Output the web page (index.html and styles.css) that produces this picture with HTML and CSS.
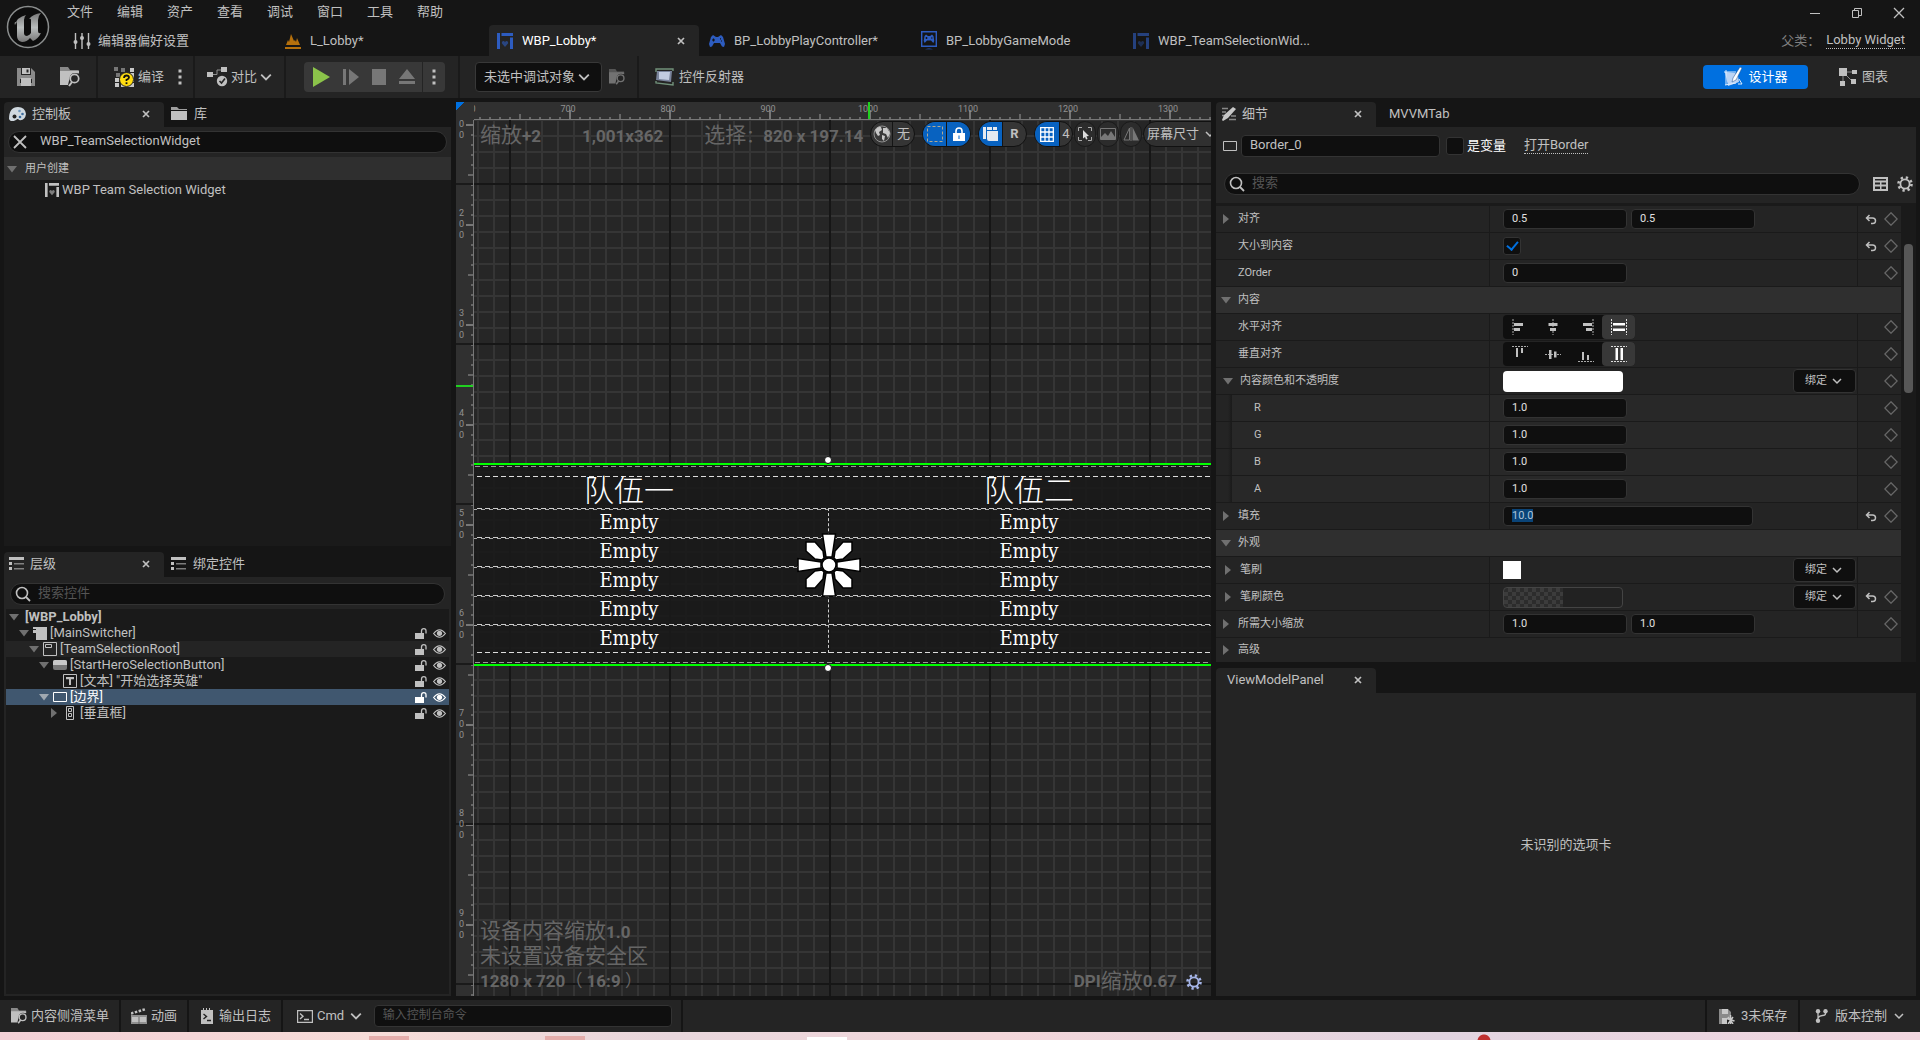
FILE: index.html
```html
<!DOCTYPE html>
<html lang="zh-CN">
<head>
	<meta charset="UTF-8">
	<meta name="viewport" content="width=device-width, initial-scale=1.0">
	<title>WBP_Lobby</title>
	<link rel="stylesheet" href="styles.css">
</head>
<body>
	<svg class="defs" aria-hidden="true">
		<symbol id="chevron" viewBox="0 0 10 10"><path d="M1 3l4 4 4-4" fill="none" stroke="currentColor" stroke-width="1.5"/></symbol>
		<symbol id="close" viewBox="0 0 10 10"><path d="M2 2l6 6M8 2L2 8" stroke="currentColor" stroke-width="1.7"/></symbol>
		<symbol id="kebab" viewBox="0 0 4 16"><path d="M.5.5h3v3h-3zM.5 6.500h3v3h-3zM.5 12.500h3v3h-3z" fill="currentColor"/></symbol>
		<symbol id="down" viewBox="0 0 10 10"><path d="M0 2h10L5 8.500z" fill="currentColor"/></symbol>
		<symbol id="right" viewBox="0 0 10 10"><path d="M2 0l6 5-6 5z" fill="currentColor"/></symbol>
		<symbol id="search" viewBox="0 0 16 16"><circle cx="7" cy="7" r="5.500" fill="none" stroke="currentColor" stroke-width="1.6"/><path d="M11 11l4 4" stroke="currentColor" stroke-width="1.8"/></symbol>
		<symbol id="sliders" viewBox="0 0 18 16"><path d="M2.500 0v16M9 0v16M15.500 0v16" stroke="currentColor" stroke-width="1.400"/><circle cx="2.500" cy="9" r="2" fill="currentColor"/><circle cx="9" cy="5" r="2" fill="currentColor"/><circle cx="15.500" cy="11" r="2" fill="currentColor"/></symbol>
		<symbol id="level" viewBox="0 0 16 16"><path d="M0 14h16v2H0zM1 12l2-5 1 2 2-8 3 7 1-1 1 2 1-4 3 7z" fill="currentColor"/></symbol>
		<symbol id="widget" viewBox="0 0 16 16"><path d="M0 0h3v16H0zM4.500 0H16v3H4.500zM13 4.500h3V16h-3z" fill="currentColor"/><path d="M8 14L4.800 10.300q-.3-2 1.500-2.300 1.200 0 1.700 1.300.5-1.300 1.700-1.300 1.800.3 1.500 2.300z" fill="currentColor" opacity=".6"/></symbol>
		<symbol id="pad" viewBox="0 0 16 14"><path d="M4 1l3 2h2l3-2 2 2 2 7-1 3-2-.5L11 9H5l-2 3.500L1 13l-1-3 2-7z" fill="currentColor"/><path d="M3 6h3M4.500 4.500v3M11 4.800h1M12 7h1" stroke="#151515" stroke-width="1.200"/></symbol>
		<symbol id="mode" viewBox="0 0 16 20"><path d="M.7.7h14.600v14.600H.7z" fill="none" stroke="currentColor" stroke-width="1.400"/><path d="M5 3.500l2 1.500h2l2-1.500 1.500 1.500.8 5-1 2L10 9.500H6L3.700 12l-1-2 .8-5z" fill="currentColor"/><path d="M4.500 7h2M5.500 6v2M10 7h1.500" stroke="#151515"/><path d="M4 18.500q4-3 8 0z" fill="currentColor" opacity=".5"/></symbol>
		<symbol id="save" viewBox="0 0 18 18"><path d="M0 0h4v7h10V0l4 4v14h-3v-7H3v7H0zM4 13h10v5H4z" fill="#8a8a8a"/><path d="M5 0h8v6H5zM4 10h10v8H4z" fill="#c0c0c0"/><path d="M9.500 1.500h2v3h-2z" fill="#242424"/><path d="M1 15h3v3H1zM14 15h3v3h-3z" fill="#8a8a8a"/></symbol>
		<symbol id="folderfind" viewBox="0 0 20 20"><path d="M0 2V0h8l2 3h9l-1 2H0z" fill="currentColor" opacity=".65"/><path d="M0 4h19v2.500q-9-2.500-9.500 5L8 18H0z" fill="currentColor"/><circle cx="14.500" cy="11.500" r="4.200" fill="none" stroke="currentColor" stroke-width="1.700"/><path d="M12 15l-3 4" stroke="currentColor" stroke-width="2"/></symbol>
		<symbol id="folder" viewBox="0 0 16 14"><path d="M0 2V0h6l2 2h8v1H0z" fill="currentColor" opacity=".8"/><path d="M0 4h16v9H0z" fill="currentColor"/></symbol>
		<symbol id="compile" viewBox="0 0 20 20"><path d="M0 0h4v4H0zM7 1h4v4H7zM2 6h4v4H2z" fill="#777"/><path d="M16 1h4v4h-4zM1 11h4v4H1zM1 16h4v4H1zM7 16h13v4H7zM16 6h4v9h-4z" fill="#c8c8c8"/><circle cx="12.500" cy="12.500" r="7" fill="#ffdc10" stroke="#242424"/><path d="M10 11q.2-2.500 2.500-2.500T15 10.500q0 1.500-2.500 2.300V14" fill="none" stroke="#111" stroke-width="1.800"/><path d="M11.600 15.300h1.800v1.800h-1.800z" fill="#111"/></symbol>
		<symbol id="diff" viewBox="0 0 21 20"><path d="M0 5h6v5H0zM14 0h6v5h-6z" fill="#c0c0c0"/><path d="M6 7.500h4V3h4" fill="none" stroke="#909090"/><circle cx="15" cy="14" r="5.200" fill="#c0c0c0"/><path d="M12.500 14l2 2 3.500-4.500" fill="none" stroke="#242424" stroke-width="1.600"/></symbol>
		<symbol id="reflector" viewBox="0 0 20 18"><path d="M2 3h15l-1 11L1 12z" fill="#7a849c"/><path d="M4 4h11l-1 8-10-1z" fill="#c2cbe0"/><path d="M1 4V1h17v2M1 13v2l17 2v-3" fill="none" stroke="#71917a" stroke-width="1.400"/></symbol>
		<symbol id="designer" viewBox="0 0 20 20"><path d="M2 5l10 1 3 3 1 6-11 4z" fill="#bcd4f4"/><path d="M17 0l2 1-6 12-4 2 1-4z" fill="#fff" stroke="#1a4c8c" stroke-width=".5"/><path d="M1 5h12M3 3v15M2 18l11-2M16 12l3 5h-4" fill="none" stroke="#dcecff"/></symbol>
		<symbol id="graph" viewBox="0 0 18 18"><path d="M4 4h10M4 4v11M4 4l10 10" stroke="#888"/><path d="M0 0h8v8H0zM13 2h5v4h-5zM1 13h5v5H1zM12 11h5v5h-5z" fill="#c0c0c0"/></symbol>
		<symbol id="palette" viewBox="0 0 17 14"><path d="M0 12Q0 0 9 0q7 0 8 7-1 7-7 6-1-2-3 0-5 3-7-1z" fill="#cfd8df"/><circle cx="5.500" cy="9.500" r="2" fill="#222"/><circle cx="10.500" cy="4" r="1.300" fill="#6f98bd"/><circle cx="13.500" cy="7" r="1.300" fill="#3d6c9d"/><circle cx="11" cy="10" r="1.300" fill="#36689c"/></symbol>
		<symbol id="tree" viewBox="0 0 15 13"><path d="M0 0h15v3H0zM0 5h3v3H0zM0 10h3v3H0z" fill="currentColor"/><path d="M5 6h10v1.500H5zM5 11h10v1.500H5z" fill="currentColor" opacity=".6"/></symbol>
		<symbol id="details" viewBox="0 0 15 14"><path d="M1 1.500h6M1 5h4M1 8.500h2M8 12.500h7M10 9h5" stroke="#888" stroke-width="1.300"/><path d="M12 0l3 2-8 9-5 3-1-1 2-5z" fill="#c8c8c8"/></symbol>
		<symbol id="unlock" viewBox="0 0 12 11"><path d="M0 5h9v6H0z" fill="currentColor"/><path d="M6.500 5V3q0-2.300 2.300-2.300T11 3v2.500" fill="none" stroke="currentColor" stroke-width="1.300"/></symbol>
		<symbol id="eye" viewBox="0 0 13 9"><path d="M.6 4.500Q6.500-3 12.400 4.500 6.500 12 .6 4.500z" fill="none" stroke="currentColor" stroke-width="1.200"/><circle cx="6.500" cy="4.300" r="2.600" fill="currentColor"/></symbol>
		<symbol id="switcher" viewBox="0 0 14 13"><path d="M0 0h3v2H0zM0 3h3v3H0zM3 0h11v13H3z" fill="currentColor"/></symbol>
		<symbol id="canvasicon" viewBox="0 0 14 14"><path d="M.5.5h13v13H.5zM2.500 2.500h6v3h-6z" fill="none" stroke="currentColor"/></symbol>
		<symbol id="buttonicon" viewBox="0 0 14 10"><rect width="14" height="10" rx="2" fill="#777"/><path d="M0 5V2q0-2 2-2h10q2 0 2 2v3z" fill="#c8c8c8"/></symbol>
		<symbol id="texticon" viewBox="0 0 14 14"><path d="M.5.5h13v13H.5z" fill="none" stroke="currentColor"/><path d="M3 3h8v2.200H8V11H6V5.200H3z" fill="currentColor"/></symbol>
		<symbol id="bordericon" viewBox="0 0 14 10"><path d="M.5.5h13v9H.5z" fill="none" stroke="currentColor"/></symbol>
		<symbol id="vbox" viewBox="0 0 8 14"><path d="M.5.5h7v13h-7zM2.500 2.500h3v3h-3zM2.500 7.500h3v3h-3z" fill="none" stroke="currentColor"/></symbol>
		<symbol id="reset" viewBox="0 0 12 11"><path d="M4.500 1L1.500 4l3 3M1.500 4h6q3 0 3 2.800T7.500 9.500H6" fill="none" stroke="currentColor" stroke-width="1.500"/></symbol>
		<symbol id="diamond" viewBox="0 0 14 14"><path d="M7 .8L13.200 7 7 13.200.8 7z" fill="none" stroke="#686868" stroke-width="1.300"/></symbol>
		<symbol id="gear" viewBox="0 0 16 16"><circle cx="8" cy="8" r="4.600" fill="none" stroke="currentColor" stroke-width="1.800"/><circle cx="8" cy="8" r="6.500" fill="none" stroke="currentColor" stroke-width="2.600" stroke-dasharray="2.300 2.805"/></symbol>
		<symbol id="table" viewBox="0 0 15 14"><path d="M0 0h15v14H0z" fill="currentColor"/><path d="M2 2h11v1.500H2zM2 5.500h5v2H2zM8.500 5.500H13v2H8.500zM2 9.500h5v2.500H2zM8.500 9.500H13v2.500H8.500z" fill="#242424"/></symbol>
		<symbol id="halign-l" viewBox="0 0 16 16"><path d="M1 0v16" stroke="#aaa" stroke-dasharray="2 1"/><path d="M2 4h9v3H2zM2 9h6v3H2z" fill="#c0c0c0"/></symbol>
		<symbol id="halign-c" viewBox="0 0 16 16"><path d="M8 0v16" stroke="#aaa" stroke-dasharray="2 1"/><path d="M3.500 4h9v3h-9zM5 9h6v3H5z" fill="#c0c0c0"/></symbol>
		<symbol id="halign-r" viewBox="0 0 16 16"><path d="M15 0v16" stroke="#aaa" stroke-dasharray="2 1"/><path d="M5 4h9v3H5zM8 9h6v3H8z" fill="#c0c0c0"/></symbol>
		<symbol id="halign-f" viewBox="0 0 16 16"><path d="M.5 0v16M15.500 0v16" stroke="#ddd" stroke-dasharray="2 1"/><path d="M2 4h12v2.500H2zM2 9.500h12V12H2z" fill="#fff"/></symbol>
		<symbol id="valign-t" viewBox="0 0 16 16"><path d="M0 .5h16" stroke="#aaa" stroke-dasharray="2 1"/><path d="M4 2h2v9H4zM9 2h2v5H9z" fill="#c0c0c0"/></symbol>
		<symbol id="valign-c" viewBox="0 0 16 16"><path d="M0 8.500h16" stroke="#aaa" stroke-dasharray="2 1"/><path d="M4 4h2.500v9H4zM9 5.500h2.500v6H9z" fill="#c0c0c0"/></symbol>
		<symbol id="valign-b" viewBox="0 0 16 16"><path d="M0 15.500h16" stroke="#aaa" stroke-dasharray="2 1"/><path d="M4 6h2v8H4zM9 9h2v5H9z" fill="#c0c0c0"/></symbol>
		<symbol id="valign-f" viewBox="0 0 16 16"><path d="M0 .5h16M0 15.500h16" stroke="#ddd" stroke-dasharray="2 1"/><path d="M4.500 2H7v12H4.500zM9.500 2H12v12H9.500z" fill="#fff"/></symbol>
		<symbol id="globe" viewBox="0 0 18 18"><circle cx="9" cy="9" r="8" fill="#3a3a3a" stroke="#909090"/><path d="M2 5q3-4 6-3l1 3-3 2 1 3-2 1-2-3zM9 10l3 1-1 5-2-2zM10 3l4 0 3 5-2 5-2-4-3-1z" fill="#c8c8c8"/></symbol>
		<symbol id="dashbox" viewBox="0 0 16 16"><path d="M.5.5h15v15H.5z" fill="none" stroke="#b0a890" stroke-dasharray="3 2"/></symbol>
		<symbol id="lock" viewBox="0 0 12 14"><path d="M0 6h12v8H0z" fill="#fff"/><path d="M3 6V4q0-3 3-3t3 3v2" fill="none" stroke="#fff" stroke-width="1.600"/><path d="M5.500 8.500h1V12h-1z" fill="#06c"/></symbol>
		<symbol id="flow" viewBox="0 0 15 14"><path d="M0 0h3v12H0zM4 0h5v3H4zM10 0h4v3h-4zM4 4h11v10H6q-2 0-2-2z" fill="#e4e9f0"/></symbol>
		<symbol id="grid" viewBox="0 0 14 15"><path d="M.7.7h12.600v13.600H.7zM5 0v15M9 0v15M0 5h14M0 10h14" fill="none" stroke="#fff" stroke-width="1.300"/></symbol>
		<symbol id="cursor" viewBox="0 0 14 14"><path d="M.5 4V.5H4M10 .5h3.500V4M13.500 10v3.500H10M4 13.500H.5V10" fill="none" stroke="#aaa"/><path d="M5 3l6 6-2.500.3L9.500 12l-1.500.5L7 10l-2 1.500z" fill="#ddd"/></symbol>
		<symbol id="image" viewBox="0 0 16 12"><path d="M.5.5h15v11H.5z" fill="none" stroke="#777"/><path d="M1 9l4-4 3 3 3-5 4 6v2H1z" fill="#777"/></symbol>
		<symbol id="flip" viewBox="0 0 16 14"><path d="M6.500 1v12H1zM8 0v14" fill="none" stroke="#777"/><path d="M9.500 0L16 13.500H9.500z" fill="#777"/></symbol>
		<symbol id="clapper" viewBox="0 0 16 16"><path d="M0 7h16v9H0z" fill="#909090"/><path d="M1 9h14v5H1z" fill="#c0c0c0"/><path d="M0 5.500L15 1" stroke="#c0c0c0" stroke-width="2.500" stroke-dasharray="2.500 1.500"/><path d="M8 9v7" stroke="#666"/></symbol>
		<symbol id="log" viewBox="0 0 12 16"><path d="M0 2h2V0h1v2h2V0h1v2h2V0h1v2h3v14H0z" fill="currentColor"/><path d="M2.500 6l3 2.500-3 2.500M6 12.500h4" fill="none" stroke="#242424" stroke-width="1.400"/></symbol>
		<symbol id="console" viewBox="0 0 16 13"><path d="M.6.6h14.800v11.800H.6z" fill="none" stroke="currentColor" stroke-width="1.200"/><path d="M3 3.500l3 2.700L3 9M7 9.500h5" fill="none" stroke="currentColor" stroke-width="1.400"/></symbol>
		<symbol id="unsaved" viewBox="0 0 16 15"><path d="M0 0h3v5h6V0l3 3v5l-3 2-6-1v6H0z" fill="#8a8a8a"/><path d="M3 0h6v5H3zM3 9h5v6H3z" fill="#c8c8c8"/><path d="M11.500 6v9M7.500 9.500l8 2.500M9 15l5-7M14 15L9 8" stroke="#c8c8c8" stroke-width="1.500"/></symbol>
		<symbol id="branch" viewBox="0 0 13 14"><path d="M3 2v10M10.500 2v2.500q0 2-3 2T3 9" fill="none" stroke="currentColor" stroke-width="1.300"/><circle cx="3" cy="2.300" r="2.200" fill="currentColor"/><circle cx="10.500" cy="2.300" r="2.200" fill="currentColor"/><circle cx="3" cy="11.700" r="2.200" fill="currentColor"/></symbol>
	</svg>

	<header class="titlebar">
		<svg class="logo" viewBox="0 0 44 44">
			<defs><linearGradient id="metal" x1="0" y1="0" x2="0" y2="1"><stop offset="0" stop-color="#777"/><stop offset=".5" stop-color="#b9bdbd"/><stop offset="1" stop-color="#777"/></linearGradient></defs>
			<circle cx="22" cy="22" r="20.500" fill="#0d0d0d" stroke="#8a8d8d" stroke-width="1.500"/>
			<path d="M9 20q2-8 11-10-2 2-2 5v13q0 3 3 3 3-1 4-3V15q0-2-2-1 4-5 12-6-3 3-3 7v11q0 3 3 2-3 6-8 8l-3-3q-3 4-8 4-5-1-5-6V20q0-3-1-3-2 0-1 3z" fill="url(#metal)"/>
		</svg>
		<div class="titlerows">
			<div class="menurow">
				<nav class="menu">
					<button>文件</button><button>编辑</button><button>资产</button><button>查看</button><button>调试</button><button>窗口</button><button>工具</button><button>帮助</button>
				</nav>
				<div class="winbtns">
					<button aria-label="最小化"><svg width="12" height="12" viewBox="0 0 12 12"><path d="M1 6.500h10" stroke="currentColor"/></svg></button>
					<button aria-label="还原"><svg width="12" height="12" viewBox="0 0 12 12"><path d="M1.500 3.500h6v7h-6zM3.500 3V1.500h7v7H8" fill="none" stroke="currentColor"/></svg></button>
					<button aria-label="关闭"><svg width="12" height="12" viewBox="0 0 12 12"><path d="M1 1l10 10M11 1L1 11" stroke="currentColor" stroke-width="1.300"/></svg></button>
				</div>
			</div>
			<div class="tabrow">
				<nav class="filetabs">
					<button class="filetab"><svg width="18" height="16"><use href="#sliders"/></svg>编辑器偏好设置</button>
					<button class="filetab level"><svg width="16" height="16"><use href="#level"/></svg><span>L_Lobby*</span></button>
					<button class="filetab blue current"><svg width="16" height="16"><use href="#widget"/></svg><span>WBP_Lobby*</span><svg class="x" width="10" height="10"><use href="#close"/></svg></button>
					<button class="filetab blue"><svg width="16" height="14"><use href="#pad"/></svg><span>BP_LobbyPlayController*</span></button>
					<button class="filetab blue"><svg width="16" height="20"><use href="#mode"/></svg><span>BP_LobbyGameMode</span></button>
					<button class="filetab blue dim"><svg width="16" height="16"><use href="#widget"/></svg><span>WBP_TeamSelectionWid...</span></button>
				</nav>
				<div class="parent">父类：<a href="#">Lobby Widget</a></div>
			</div>
		</div>
	</header>

	<div class="toolbar">
		<div class="tools filetools">
			<button aria-label="保存"><svg width="18" height="18"><use href="#save"/></svg></button>
			<button aria-label="浏览"><svg width="20" height="20"><use href="#folderfind"/></svg></button>
		</div>
		<div class="tools compile">
			<button><svg width="20" height="20"><use href="#compile"/></svg>编译</button>
			<button aria-label="编译选项"><svg width="4" height="16"><use href="#kebab"/></svg></button>
		</div>
		<div class="tools diff">
			<button><svg width="21" height="20"><use href="#diff"/></svg>对比<svg width="12" height="12"><use href="#chevron"/></svg></button>
		</div>
		<div class="tools playbox">
			<div class="play">
				<button aria-label="运行"><svg width="17" height="20" viewBox="0 0 17 20"><path d="M0 0l17 10L0 20z" fill="#8bc34a"/></svg></button>
				<button aria-label="跳帧"><svg width="16" height="18" viewBox="0 0 16 18"><path d="M0 1h3v16H0zM6 1l10 8-10 8z" fill="#777"/></svg></button>
				<button aria-label="停止"><svg width="14" height="16" viewBox="0 0 14 16"><path d="M0 0h14v16H0z" fill="#777"/></svg></button>
				<button aria-label="弹出"><svg width="16" height="16" viewBox="0 0 16 16"><path d="M8 0l8 10H0zM0 12h16v3H0z" fill="#777"/></svg></button>
				<button class="more" aria-label="运行选项"><svg width="4" height="16"><use href="#kebab"/></svg></button>
			</div>
		</div>
		<div class="tools debug">
			<label class="picker"><select aria-label="调试对象"><option>未选中调试对象</option></select><svg width="12" height="12"><use href="#chevron"/></svg></label>
			<button class="faded" aria-label="浏览调试对象"><svg width="16" height="18"><use href="#folderfind"/></svg></button>
		</div>
		<div class="tools reflect">
			<button><svg width="20" height="18"><use href="#reflector"/></svg>控件反射器</button>
		</div>
		<div class="modes">
			<button class="mode on"><svg width="20" height="20"><use href="#designer"/></svg>设计器</button>
			<button class="mode"><svg width="18" height="18"><use href="#graph"/></svg>图表</button>
		</div>
	</div>

	<main class="workspace">
		<div class="side">
			<section class="panel">
				<div class="tabs">
					<button class="tab on"><svg width="17" height="14"><use href="#palette"/></svg>控制板<svg class="x" width="10" height="10"><use href="#close"/></svg></button>
					<button class="tab"><svg width="16" height="14"><use href="#folder"/></svg>库</button>
				</div>
				<div class="panelbody">
					<label class="searchbox palettesearch"><svg width="16" height="16" viewBox="0 0 16 16"><path d="M2 2l12 12M14 2L2 14" stroke="currentColor" stroke-width="1.800"/></svg><input type="text" aria-label="搜索控制板" value="WBP_TeamSelectionWidget"></label>
					<div class="group"><svg width="10" height="10"><use href="#down"/></svg>用户创建</div>
					<div class="list"><div class="listitem"><svg width="16" height="14"><use href="#widget"/></svg>WBP Team Selection Widget</div></div>
				</div>
			</section>
			<section class="panel">
				<div class="tabs">
					<button class="tab on"><svg width="15" height="13"><use href="#tree"/></svg>层级<svg class="x" width="10" height="10"><use href="#close"/></svg></button>
					<button class="tab"><svg width="15" height="13"><use href="#tree"/></svg>绑定控件</button>
				</div>
				<div class="panelbody hierarchy">
					<label class="searchbox"><svg width="16" height="16"><use href="#search"/></svg><input type="text" aria-label="搜索控件" placeholder="搜索控件"></label>
					<ul class="tree">
						<li><svg class="arrow" width="10" height="10"><use href="#down"/></svg><b>[WBP_Lobby]</b></li>
						<li class="d1"><svg class="arrow" width="10" height="10"><use href="#down"/></svg><svg class="kind" width="14" height="13"><use href="#switcher"/></svg>[MainSwitcher]<span class="flags"><svg width="12" height="11"><use href="#unlock"/></svg><svg width="13" height="9"><use href="#eye"/></svg></span></li>
						<li class="d2 alt"><svg class="arrow" width="10" height="10"><use href="#down"/></svg><svg class="kind" width="14" height="14"><use href="#canvasicon"/></svg>[TeamSelectionRoot]<span class="flags"><svg width="12" height="11"><use href="#unlock"/></svg><svg width="13" height="9"><use href="#eye"/></svg></span></li>
						<li class="d3"><svg class="arrow" width="10" height="10"><use href="#down"/></svg><svg class="kind" width="14" height="10"><use href="#buttonicon"/></svg>[StartHeroSelectionButton]<span class="flags"><svg width="12" height="11"><use href="#unlock"/></svg><svg width="13" height="9"><use href="#eye"/></svg></span></li>
						<li class="d4"><span class="arrow"></span><svg class="kind" width="14" height="14"><use href="#texticon"/></svg>[文本] "开始选择英雄"<span class="flags"><svg width="12" height="11"><use href="#unlock"/></svg><svg width="13" height="9"><use href="#eye"/></svg></span></li>
						<li class="d3 selected"><svg class="arrow" width="10" height="10"><use href="#down"/></svg><svg class="kind" width="14" height="10"><use href="#bordericon"/></svg>[边界]<span class="flags"><svg width="12" height="11"><use href="#unlock"/></svg><svg width="13" height="9"><use href="#eye"/></svg></span></li>
						<li class="d4"><svg class="arrow" width="10" height="10"><use href="#right"/></svg><svg class="kind" width="14" height="14"><use href="#vbox"/></svg>[垂直框]<span class="flags"><svg width="12" height="11"><use href="#unlock"/></svg><svg width="13" height="9"><use href="#eye"/></svg></span></li>
					</ul>
				</div>
			</section>
		</div>

		<section class="stage">
			<div class="corner"></div>
			<div class="ruler-x"><span>600</span><span>700</span><span>800</span><span>900</span><span>1000</span><span>1100</span><span>1200</span><span>1300</span><i></i></div>
			<div class="ruler-y"><span>100</span><span>200</span><span>300</span><span>400</span><span>500</span><span>600</span><span>700</span><span>800</span><span>900</span><i></i></div>
			<div class="canvas">
				<div class="border-widget">
					<div class="vertical-box">
						<div class="heads"><span>队伍一</span><span>队伍二</span></div>
						<div class="teams">
							<div class="team"><span>Empty</span><span>Empty</span><span>Empty</span><span>Empty</span><span>Empty</span></div>
							<div class="team"><span>Empty</span><span>Empty</span><span>Empty</span><span>Empty</span><span>Empty</span></div>
						</div>
					</div>
					<b class="handle top"></b>
					<b class="handle bottom"></b>
					<svg class="anchor" viewBox="-32 -32 64 64">
						<g fill="#fff" stroke="#000" stroke-width="1.500">
							<path d="M-6.500-31h13L3-8h-6z"/>
							<path d="M-31-6.500v13L-8 3v-6zM31-6.500v13L8 3v-6zM-6.500 31h13L3 8h-6z"/>
							<path d="M-23-23h9l8 9 1 7-2 2-7-1-9-8zM23-23h-9l-8 9-1 7 2 2 7-1 9-8zM-23 23h9l8-9 1-7-2-2-7 1-9 8zM23 23h-9l-8-9-1-7 2-2 7 1 9 8z"/>
							<circle r="7"/>
						</g>
					</svg>
				</div>
				<div class="hud">
					<div class="hudtext"><span><big>缩放</big>+2</span><span>1,001x362</span><span><big>选择</big><em>：</em>820 x 197.14</span></div>
					<div class="hudtools">
						<div class="pill"><button aria-label="本地化"><svg width="18" height="18"><use href="#globe"/></svg></button><button>无</button></div>
						<div class="pill"><button class="on" aria-label="轮廓"><svg width="16" height="16"><use href="#dashbox"/></svg></button><button class="on" aria-label="锁定"><svg width="12" height="14"><use href="#lock"/></svg></button></div>
						<div class="pill"><button class="on" aria-label="布局"><svg width="15" height="14"><use href="#flow"/></svg></button><button><b>R</b></button></div>
						<div class="pill snap"><button class="on" aria-label="网格"><svg width="14" height="15"><use href="#grid"/></svg></button><button>4</button></div>
						<button class="round" aria-label="缩放至适合"><svg width="14" height="14"><use href="#cursor"/></svg></button>
						<button class="round" aria-label="预览背景"><svg width="16" height="12"><use href="#image"/></svg></button>
						<button class="round" aria-label="翻转"><svg width="16" height="14"><use href="#flip"/></svg></button>
						<label class="screensize"><select aria-label="屏幕尺寸"><option>屏幕尺寸</option></select><svg width="10" height="10"><use href="#chevron"/></svg></label>
					</div>
				</div>
				<div class="hud foot">
					<div class="notes"><p><big>设备内容缩放</big>1.0</p><p><big>未设置设备安全区</big></p><p>1280 x 720<em>（</em> 16:9 <em>）</em></p></div>
					<div class="dpi">DPI<big>缩放</big>0.67<svg width="16" height="16"><use href="#gear"/></svg></div>
				</div>
			</div>
		</section>

		<div class="inspector">
			<section class="panel detailspanel">
				<div class="tabs">
					<button class="tab on"><svg width="15" height="14"><use href="#details"/></svg>细节<svg class="x" width="10" height="10"><use href="#close"/></svg></button>
					<button class="tab">MVVMTab</button>
				</div>
				<div class="panelbody">
					<div class="namerow">
						<svg width="14" height="10"><use href="#bordericon"/></svg>
						<input class="name" type="text" aria-label="名称" value="Border_0">
						<label class="isvar"><input type="checkbox">是变量</label>
						<a href="#">打开Border</a>
					</div>
					<div class="findrow">
						<label class="searchbox"><svg width="16" height="16"><use href="#search"/></svg><input type="text" aria-label="搜索" placeholder="搜索"></label>
						<button aria-label="属性矩阵"><svg width="15" height="14"><use href="#table"/></svg></button>
						<button aria-label="设置"><svg width="16" height="16"><use href="#gear"/></svg></button>
					</div>
					<div class="scroller">
						<div class="props">
							<div class="prop"><div class="name"><svg width="10" height="10"><use href="#right"/></svg>对齐</div><div class="value"><input type="text" aria-label="对齐 X" value="0.5"><input type="text" aria-label="对齐 Y" value="0.5"></div><div class="keys"><svg width="12" height="11"><use href="#reset"/></svg><svg width="14" height="14"><use href="#diamond"/></svg></div></div>
							<div class="prop"><label class="name" for="autosize">大小到内容</label><div class="value"><input id="autosize" type="checkbox" checked></div><div class="keys"><svg width="12" height="11"><use href="#reset"/></svg><svg width="14" height="14"><use href="#diamond"/></svg></div></div>
							<div class="prop"><label class="name" for="zorder">ZOrder</label><div class="value"><input id="zorder" type="text" value="0"></div><div class="keys"><svg width="14" height="14"><use href="#diamond"/></svg></div></div>
							<div class="category"><svg width="10" height="10"><use href="#down"/></svg>内容</div>
							<div class="prop"><div class="name">水平对齐</div><div class="value"><div class="align"><button aria-label="左"><svg width="16" height="16"><use href="#halign-l"/></svg></button><button aria-label="中"><svg width="16" height="16"><use href="#halign-c"/></svg></button><button aria-label="右"><svg width="16" height="16"><use href="#halign-r"/></svg></button><button class="on" aria-label="填充"><svg width="16" height="16"><use href="#halign-f"/></svg></button></div></div><div class="keys"><svg width="14" height="14"><use href="#diamond"/></svg></div></div>
							<div class="prop"><div class="name">垂直对齐</div><div class="value"><div class="align"><button aria-label="上"><svg width="16" height="16"><use href="#valign-t"/></svg></button><button aria-label="中"><svg width="16" height="16"><use href="#valign-c"/></svg></button><button aria-label="下"><svg width="16" height="16"><use href="#valign-b"/></svg></button><button class="on" aria-label="填充"><svg width="16" height="16"><use href="#valign-f"/></svg></button></div></div><div class="keys"><svg width="14" height="14"><use href="#diamond"/></svg></div></div>
							<div class="prop bindable"><div class="name"><svg width="10" height="10"><use href="#down"/></svg>内容颜色和不透明度</div><div class="value"><button class="swatch" aria-label="内容颜色"></button><button class="bind">绑定<svg width="10" height="10"><use href="#chevron"/></svg></button></div><div class="keys"><svg width="14" height="14"><use href="#diamond"/></svg></div></div>
							<div class="prop child"><label class="name" for="cr">R</label><div class="value"><input id="cr" type="text" value="1.0"></div><div class="keys"><svg width="14" height="14"><use href="#diamond"/></svg></div></div>
							<div class="prop child"><label class="name" for="cg">G</label><div class="value"><input id="cg" type="text" value="1.0"></div><div class="keys"><svg width="14" height="14"><use href="#diamond"/></svg></div></div>
							<div class="prop child"><label class="name" for="cb">B</label><div class="value"><input id="cb" type="text" value="1.0"></div><div class="keys"><svg width="14" height="14"><use href="#diamond"/></svg></div></div>
							<div class="prop child"><label class="name" for="ca">A</label><div class="value"><input id="ca" type="text" value="1.0"></div><div class="keys"><svg width="14" height="14"><use href="#diamond"/></svg></div></div>
							<div class="prop"><label class="name" for="padding"><svg width="10" height="10"><use href="#right"/></svg>填充</label><div class="value"><input id="padding" class="wide" type="text" value="10.0"></div><div class="keys"><svg width="12" height="11"><use href="#reset"/></svg><svg width="14" height="14"><use href="#diamond"/></svg></div></div>
							<div class="category"><svg width="10" height="10"><use href="#down"/></svg>外观</div>
							<div class="prop bindable"><div class="name"><svg width="10" height="10"><use href="#right"/></svg>笔刷</div><div class="value"><span class="brush"></span><button class="bind">绑定<svg width="10" height="10"><use href="#chevron"/></svg></button></div><div class="keys"></div></div>
							<div class="prop bindable"><div class="name"><svg width="10" height="10"><use href="#right"/></svg>笔刷颜色</div><div class="value"><button class="swatch clear" aria-label="笔刷颜色"></button><button class="bind">绑定<svg width="10" height="10"><use href="#chevron"/></svg></button></div><div class="keys"><svg width="12" height="11"><use href="#reset"/></svg><svg width="14" height="14"><use href="#diamond"/></svg></div></div>
							<div class="prop"><div class="name"><svg width="10" height="10"><use href="#right"/></svg>所需大小缩放</div><div class="value"><input type="text" aria-label="缩放 X" value="1.0"><input type="text" aria-label="缩放 Y" value="1.0"></div><div class="keys"><svg width="14" height="14"><use href="#diamond"/></svg></div></div>
							<div class="category advanced"><svg width="10" height="10"><use href="#right"/></svg>高级</div>
						</div>
						<div class="scrollbar"><div class="thumb"></div></div>
					</div>
				</div>
			</section>
			<section class="panel viewmodel">
				<div class="tabs"><button class="tab on">ViewModelPanel<svg class="x" width="10" height="10"><use href="#close"/></svg></button></div>
				<div class="panelbody unknown">未识别的选项卡</div>
			</section>
		</div>
	</main>

	<footer class="statusbar">
		<button class="drawer"><svg width="16" height="16"><use href="#folderfind"/></svg>内容侧滑菜单</button>
		<button class="anim"><svg width="16" height="16"><use href="#clapper"/></svg>动画</button>
		<button class="output"><svg width="12" height="16"><use href="#log"/></svg>输出日志</button>
		<div class="cmd">
			<svg width="16" height="13"><use href="#console"/></svg>
			<label><select aria-label="命令类型"><option>Cmd</option></select><svg width="12" height="12"><use href="#chevron"/></svg></label>
			<input type="text" aria-label="控制台命令" placeholder="输入控制台命令">
		</div>
		<div class="fill"></div>
		<button class="unsaved"><svg width="16" height="15"><use href="#unsaved"/></svg>3未保存</button>
		<button class="source"><svg width="13" height="14"><use href="#branch"/></svg>版本控制<svg width="10" height="10"><use href="#chevron"/></svg></button>
	</footer>
	<div class="desktop"></div>
	<script>
		// padding field is being edited, its value stays selected
		const padding = document.getElementById("padding");
		padding.focus({ preventScroll: true });
		padding.select();
	</script>
</body>
</html>
```
FILE: styles.css
```css
* {
	box-sizing: border-box;
}

body {
	margin: 0;
	min-height: 100vh;
	display: flex;
	flex-direction: column;
	background-color: #151515;
	color: #c0c0c0;
	font-family: Roboto, "Noto Sans CJK SC", sans-serif;
	font-size: 13px;
	line-height: 16px;
	overflow-x: hidden;
}

button, input, select {
	font: inherit;
	color: inherit;
	margin: 0;
	padding: 0;
	border: none;
	background: none;
	outline: none;
}

button {
	display: flex;
	align-items: center;
	white-space: nowrap;
}

select {
	appearance: none;
}

svg {
	flex: none;
	display: block;
}

.defs {
	position: absolute;
	width: 0;
	height: 0;
}

a {
	color: #c0c0c0;
	text-decoration: none;
	border-bottom: 1px dotted #c0c0c0;
}

input::placeholder {
	color: #555;
	opacity: 1;
}

/* title bar */
.titlebar {
	display: flex;
	height: 56px;
}

.logo {
	width: 44px;
	height: 44px;
	margin: 5px 11px 0 6px;
}

.titlerows {
	flex: 1;
}

.menurow, .tabrow {
	display: flex;
	justify-content: space-between;
}

.menurow {
	height: 25px;
}

.menu, .winbtns, .filetabs {
	display: flex;
}

.menu button {
	width: 50px;
	padding: 0 6px 2px;
}

.winbtns button {
	width: 42px;
	justify-content: center;
}

.tabrow {
	height: 31px;
}

.filetabs {
	margin-left: 4px;
}

.filetab {
	width: 212px;
	padding: 0 8px;
	gap: 9px;
	border-radius: 4px 4px 0 0;
}

.filetab:first-child {
	gap: 7px;
}

.filetab.current {
	width: 210px;
	margin-right: 2px;
	background-color: #242424;
	color: #fff;
}

.level svg {
	color: #b5700c;
}

.blue svg {
	color: #2d5cc0;
}

.dim svg {
	color: #25417e;
}

.filetab .x {
	margin-left: auto;
	margin-right: 5px;
	color: #c0c0c0;
}

.parent {
	display: flex;
	gap: 6px;
	align-items: center;
	margin-right: 15px;
	color: #808080;
}

/* toolbar */
.toolbar {
	display: flex;
	height: 42px;
	margin-bottom: 4px;
	background-color: #242424;
}

.tools {
	display: flex;
	align-items: center;
	border-right: 2px solid #1a1a1a;
}

.tools button {
	gap: 4px;
}

.filetools {
	width: 98px;
	padding-left: 17px;
	gap: 25px;
}

.compile {
	width: 97px;
	padding-left: 16px;
	gap: 14px;
}

.diff {
	width: 91px;
	padding-left: 12px;
}

.diff button {
	gap: 3px;
}

.playbox {
	width: 174px;
	padding-left: 18px;
}

.play {
	display: flex;
	width: 141px;
	height: 30px;
	padding-left: 9px;
	gap: 13px;
	border-radius: 4px;
	background-color: #383838;
}

.play .more {
	width: 24px;
	margin-left: -6px;
	justify-content: center;
	border-left: 1px solid #242424;
}

.debug {
	width: 179px;
	padding-left: 15px;
	gap: 7px;
}

.picker {
	display: flex;
	align-items: center;
	width: 127px;
	height: 30px;
	padding: 0 8px;
	background-color: #0f0f0f;
	border: 1px solid #383838;
	border-radius: 4px;
}

.picker select {
	width: 94px;
}

.faded {
	opacity: 0.5;
}

.reflect {
	border: none;
	padding-left: 16px;
}

.modes {
	display: flex;
	align-items: center;
	gap: 16px;
	margin-left: auto;
	margin-right: 17px;
}

.mode {
	height: 24px;
	padding: 0 15px;
	gap: 5px;
}

.mode.on {
	width: 105px;
	justify-content: center;
	background-color: #0070e0;
	color: #fff;
	border-radius: 4px;
}

/* docked panels */
.workspace {
	flex: 1;
	display: grid;
	grid-template-columns: 447fr 755fr 700fr;
	gap: 5px;
	padding: 0 4px;
}

.side, .inspector {
	display: flex;
	flex-direction: column;
	gap: 6px;
	min-width: 0;
}

.panel {
	flex: 1;
	display: flex;
	flex-direction: column;
}

.tabs {
	display: flex;
	height: 25px;
}

.tab {
	gap: 7px;
	padding: 0 12px 2px 7px;
	border-radius: 4px 4px 0 0;
}

.tab.on {
	width: 160px;
	padding: 0 13px 2px 5px;
	gap: 6px;
	background-color: #242424;
}

.tab .x {
	margin-left: auto;
}

.viewmodel .tab.on {
	padding-left: 11px;
}

.detailspanel .tab:last-child {
	padding-left: 13px;
}

.panelbody {
	flex: 1;
	display: flex;
	flex-direction: column;
	background-color: #242424;
}

.searchbox {
	display: flex;
	align-items: center;
	gap: 7px;
	height: 22px;
	margin: 6px;
	padding: 0 4px;
	background-color: #0f0f0f;
	border: 1px solid #333;
	border-radius: 11px;
}

.searchbox input {
	flex: 1;
	padding-bottom: 2px;
}

.palettesearch {
	margin: 4px;
	padding: 0 3px;
	gap: 12px;
}

.group {
	display: flex;
	align-items: center;
	gap: 8px;
	height: 23px;
	padding-left: 3px;
	background-color: #2f2f2f;
	font-size: 11px;
}

.group svg, .tree .arrow, .prop .name svg, .category svg {
	color: #707070;
}

.list {
	flex: 1;
	background-color: #1a1a1a;
}

.listitem {
	display: flex;
	align-items: center;
	height: 20px;
	padding-left: 40px;
	gap: 2px;
}

.hierarchy {
	padding: 0 2px 2px;
}

.hierarchy .searchbox {
	margin: 6px 4px 4px;
}

.tree {
	flex: 1;
	margin: 0;
	padding: 0;
	list-style: none;
	background-color: #1a1a1a;
}

.tree li {
	display: flex;
	align-items: center;
	gap: 3px;
	height: 16px;
	padding: 0 3px;
}

.tree b {
	margin-left: 2px;
}

.tree .arrow {
	width: 10px;
	margin-right: 1px;
}

.tree .d1 {
	padding-left: 13px;
}

.tree .d2 {
	padding-left: 23px;
}

.tree .d3 {
	padding-left: 33px;
}

.tree .d4 {
	padding-left: 43px;
}

.tree .alt {
	background-color: #242424;
}

.tree .selected {
	background-color: #40576f;
	color: #fff;
}

.tree .selected .arrow {
	color: #a0a8b0;
}

.flags {
	display: flex;
	align-items: center;
	gap: 6px;
	margin-left: auto;
}

/* designer stage */
.stage {
	display: grid;
	grid-template: 18px 1fr / 18px 1fr;
	min-width: 0;
	background-color: #303030;
}

.corner {
	background: linear-gradient(135deg, #0070e0 6px, #303030 6px);
}

.ruler-x, .ruler-y {
	position: relative;
	display: flex;
	overflow: hidden;
	color: #909090;
	font-size: 9px;
	line-height: 11px;
}

.ruler-x {
	border-bottom: 1px solid #777;
	background:
		repeating-linear-gradient(90deg, #777 0 2px, transparent 2px 100px) -5px 100% / 2000px 9px no-repeat,
		repeating-linear-gradient(90deg, #666 0 2px, transparent 2px 50px) -5px 100% / 2000px 5px no-repeat,
		repeating-linear-gradient(90deg, #666 0 2px, transparent 2px 10px) -5px 100% / 2000px 2px no-repeat;
}

.ruler-x span {
	flex: none;
	width: 100px;
	margin-top: 2px;
	text-align: center;
}

.ruler-x span:first-child {
	margin-left: -56px;
}

.ruler-x i {
	position: absolute;
	left: 394px;
	top: 0;
	width: 2px;
	height: 18px;
	background-color: #20d020;
}

.ruler-y {
	flex-direction: column;
	border-right: 1px solid #777;
	background:
		linear-gradient(#1a1a1a 0 2px, transparent 2px) 0 63px / 100% 160px,
		repeating-linear-gradient(#777 0 2px, transparent 2px 100px) 100% 4px / 7px 2000px no-repeat,
		repeating-linear-gradient(#666 0 2px, transparent 2px 50px) 100% 4px / 5px 2000px no-repeat,
		repeating-linear-gradient(#666 0 2px, transparent 2px 10px) 100% 4px / 2px 2000px no-repeat;
}

.ruler-y span {
	flex: none;
	display: flex;
	align-items: center;
	justify-content: center;
	width: 11px;
	height: 100px;
	line-height: 11px;
	word-break: break-all;
	padding: 0 3px;
	text-align: center;
}

.ruler-y span:first-child {
	margin-top: -46px;
}

.ruler-y i {
	position: absolute;
	left: 0;
	top: 265px;
	width: 18px;
	height: 2px;
	background-color: #20d020;
}

.canvas {
	position: relative;
	display: flex;
	flex-direction: column;
	justify-content: space-between;
	overflow: hidden;
	background:
		linear-gradient(90deg, #161616 2px, transparent 2px) 35px 0 / 160px 100%,
		linear-gradient(#161616 2px, transparent 2px) 0 63px / 100% 160px,
		linear-gradient(90deg, #353535 2px, transparent 2px) 3px 0 / 16px 100%,
		linear-gradient(#353535 2px, transparent 2px) 0 15px / 100% 16px,
		#262626;
}

/* selected border widget, at its own place on the canvas */
.border-widget {
	position: absolute;
	left: -55px;
	top: 343px;
	width: 820px;
	padding: 11px 10px;
	border: solid #00ff00;
	border-width: 2px 0;
	background:
		repeating-linear-gradient(90deg, #999 0 5px, transparent 5px 8px) 0 1px / 100% 1px no-repeat,
		repeating-linear-gradient(90deg, #999 0 5px, transparent 5px 8px) 0 197px / 100% 1px no-repeat,
		rgba(26, 26, 26, 0.9);
}

.vertical-box {
	background:
		repeating-linear-gradient(90deg, #ddd 0 5px, transparent 5px 8px) 0 0 / 100% 1px no-repeat,
		repeating-linear-gradient(90deg, #ddd 0 5px, transparent 5px 8px) 0 100% / 100% 1px no-repeat;
}

.heads {
	display: grid;
	grid-template-columns: 1fr 1fr;
	height: 32px;
	color: #fff;
	font-size: 30px;
	font-weight: 300;
	line-height: 30px;
	text-align: center;
}

.teams {
	display: grid;
	grid-template-columns: 1fr 1fr;
}

.team span {
	display: block;
	height: 29px;
	color: #fff;
	font-family: "DejaVu Serif Condensed", "DejaVu Serif", serif;
	font-size: 20px;
	line-height: 29px;
	text-align: center;
	background:
		repeating-linear-gradient(90deg, #ccc 0 5px, transparent 5px 8px) 0 0 / 100% 1px no-repeat,
		repeating-linear-gradient(90deg, transparent 0 4px, #aaa 4px 8px) 0 1px / 100% 1px no-repeat;
}

.team + .team {
	margin-left: -1px;
	border-left: 1px dashed #ccc;
}

.handle {
	position: absolute;
	left: 50%;
	width: 8px;
	height: 8px;
	margin-left: -5px;
	border: 1px solid #111;
	border-radius: 50%;
	background-color: #fff;
}

.handle.top {
	top: -9px;
}

.handle.bottom {
	bottom: -8px;
}

.anchor {
	position: absolute;
	left: 50%;
	top: 50%;
	width: 64px;
	height: 64px;
	margin: -32px;
}

.hud {
	position: relative;
	display: flex;
	justify-content: space-between;
	align-items: flex-start;
	color: #666;
	font-size: 17px;
	font-weight: 700;
	line-height: 25px;
}

.hud big {
	font-size: 21px;
	font-weight: 400;
}

.hud em {
	font-style: normal;
	font-weight: 400;
}

.hudtext {
	display: flex;
	align-items: center;
	gap: 41px;
	height: 32px;
	padding-left: 6px;
	white-space: nowrap;
}

.hudtools {
	display: flex;
	align-items: center;
	width: 341px;
	height: 28px;
	flex: none;
	overflow: hidden;
	color: #c0c0c0;
	font-size: 13px;
	font-weight: 400;
	line-height: 16px;
}

.pill {
	display: flex;
	flex: none;
	width: 49px;
	height: 26px;
	margin-right: 7px;
	overflow: hidden;
	border: 1px solid #111;
	border-radius: 13px;
	background-color: #353535;
}

.pill:first-child {
	width: 45px;
}

.pill.snap {
	width: 39px;
	margin-right: 1px;
}

.pill button {
	flex: 1;
	justify-content: center;
}

.pill.snap .on {
	flex: none;
	width: 24px;
}

.pill button + button {
	border-left: 1px solid #151515;
}

.pill .on {
	background-color: #0862c0;
}

.round {
	flex: none;
	width: 22px;
	height: 26px;
	margin-right: 1px;
	justify-content: center;
	border: 1px solid #1a1a1a;
	border-radius: 13px;
	background-color: #2c2c2c;
}

.screensize {
	display: flex;
	align-items: center;
	flex: none;
	width: 80px;
	height: 26px;
	padding-left: 3px;
	gap: 5px;
	border: 1px solid #111;
	border-radius: 13px;
	background-color: #303030;
}

.hud.foot {
	align-items: flex-end;
	padding: 0 9px 2px 6px;
}

.foot p {
	margin: 0;
	height: 25px;
}

.dpi {
	display: flex;
	align-items: center;
	height: 25px;
}

.dpi svg {
	margin-left: 9px;
	color: #a5b5e8;
}

/* details */
.detailspanel {
	flex: 560 0 0;
}

.viewmodel {
	flex: 328 0 0;
}

.namerow {
	display: flex;
	align-items: center;
	height: 37px;
	padding: 0 7px;
}

.namerow input.name {
	width: 199px;
	height: 22px;
	margin: 0 6px 0 4px;
	padding: 0 8px 2px;
	background-color: #0f0f0f;
	border: 1px solid #333;
	border-radius: 4px;
}

.isvar {
	display: flex;
	align-items: center;
	gap: 3px;
	margin-right: 18px;
	color: #fff;
}

input[type="checkbox"] {
	appearance: none;
	width: 18px;
	height: 18px;
	background-color: #0f0f0f;
	border: 1px solid #333;
	border-radius: 3px;
}

input[type="checkbox"]:checked::after {
	content: "";
	display: block;
	width: 5px;
	height: 9px;
	margin: 1px 5px;
	border: solid #0070e0;
	border-width: 0 2px 2px 0;
	transform: rotate(40deg);
}

.findrow {
	display: flex;
	align-items: center;
	height: 39px;
	padding: 0 3px 0 8px;
}

.findrow .searchbox {
	flex: 1;
	margin: 0 13px 0 0;
}

.findrow button {
	width: 16px;
	margin-right: 8px;
}

.findrow button:last-child {
	margin-right: 0;
}

.scroller {
	display: flex;
	flex: 1;
	font-size: 11px;
}

.props {
	flex: 1;
	padding-top: 2px;
	background-color: #1a1a1a;
}

.prop {
	display: grid;
	grid-template-columns: 273px 1fr 43px;
	gap: 1px;
	height: 27px;
	padding-top: 1px;
}

.prop > * {
	display: flex;
	align-items: center;
	background-color: #242424;
}

.prop .name {
	padding-left: 22px;
}

.prop .name svg {
	margin: 0 7px 0 -17px;
}

.prop.bindable .name {
	padding-left: 24px;
}

.prop.child .name {
	padding-left: 38px;
	background: linear-gradient(90deg, #242424 12px, #1a1a1a 16px, #282828 16px);
}

.prop.child .value {
	background-color: #282828;
}

.value {
	gap: 4px;
	padding: 0 1px 0 13px;
}

.value input[type="text"] {
	width: 124px;
	height: 20px;
	padding: 0 8px 2px;
	background-color: #0f0f0f;
	border: 1px solid #333;
	border-radius: 4px;
	color: #e0e0e0;
}

.value input[type="text"].wide {
	width: 250px;
}

.wide::selection {
	background-color: #0a4478;
	color: #b0c4d8;
}

.keys {
	justify-content: flex-end;
	gap: 7px;
	padding-right: 3px;
}

.category {
	display: flex;
	align-items: center;
	gap: 7px;
	height: 26px;
	margin-top: 1px;
	padding-left: 5px;
	background-color: #2f2f2f;
}

.category.advanced {
	height: 24px;
	background-color: #242424;
}

.align {
	display: flex;
	width: 132px;
	height: 24px;
	background-color: #0f0f0f;
	border-radius: 4px;
}

.align button {
	flex: 1;
	justify-content: center;
	border-radius: 4px;
}

.align .on {
	background-color: #383838;
}

.swatch {
	width: 120px;
	height: 21px;
	border-radius: 4px;
	background-color: #fff;
}

.swatch.clear {
	border: 1px solid #444;
	background:
		linear-gradient(90deg, transparent 50%, #222 50%),
		repeating-conic-gradient(#3c3c3c 0 25%, #2c2c2c 0 50%) 0 0 / 8px 8px;
}

.brush {
	width: 18px;
	height: 18px;
	background-color: #fff;
}

.bind {
	width: 63px;
	height: 24px;
	margin-left: auto;
	padding: 0 11px;
	gap: 5px;
	background-color: #0f0f0f;
	border: 1px solid #333;
	border-radius: 4px;
}

.scrollbar {
	width: 15px;
	padding: 41px 3px 0;
	background-color: #1a1a1a;
}

.thumb {
	width: 9px;
	height: 149px;
	border-radius: 4px;
	background-color: #575757;
}

.unknown {
	align-items: center;
	justify-content: center;
}

/* status bar */
.statusbar {
	display: flex;
	gap: 2px;
	height: 32px;
	margin-top: 4px;
}

.statusbar > * {
	display: flex;
	align-items: center;
	background-color: #242424;
}

.drawer {
	width: 119px;
	padding-left: 11px;
	gap: 4px;
}

.anim {
	width: 66px;
	padding-left: 10px;
	gap: 4px;
}

.output {
	width: 92px;
	padding-left: 12px;
	gap: 6px;
}

.cmd {
	width: 398px;
	padding-left: 14px;
	gap: 4px;
}

.cmd label {
	display: flex;
	align-items: center;
	width: 53px;
	gap: 5px;
}

.cmd input {
	width: 299px;
	height: 22px;
	margin-left: auto;
	margin-right: 9px;
	padding: 0 8px 2px;
	font-size: 12px;
	background-color: #0f0f0f;
	border: 1px solid #333;
	border-radius: 4px;
}

.fill {
	flex: 1;
}

.unsaved {
	width: 91px;
	padding-left: 12px;
	gap: 6px;
}

.source {
	width: 120px;
	padding-left: 15px;
	gap: 7px;
}

/* strip of the desktop under the window */
.desktop {
	height: 8px;
	background:
		radial-gradient(circle at 1484px 9px, #c03030 6px, transparent 7px),
		linear-gradient(#e5adab, #e5adab) 369px 4px / 40px 4px no-repeat,
		linear-gradient(#e5adab, #e5adab) 545px 4px / 40px 4px no-repeat,
		linear-gradient(#fff, #fff) 807px 5px / 40px 3px no-repeat,
		linear-gradient(90deg, #f3d0d6, #f7dcd8 20%, #e8d6dc 35%, #f3d6da 52%, #e2d4e0 75%, #f2d6df);
}
```
